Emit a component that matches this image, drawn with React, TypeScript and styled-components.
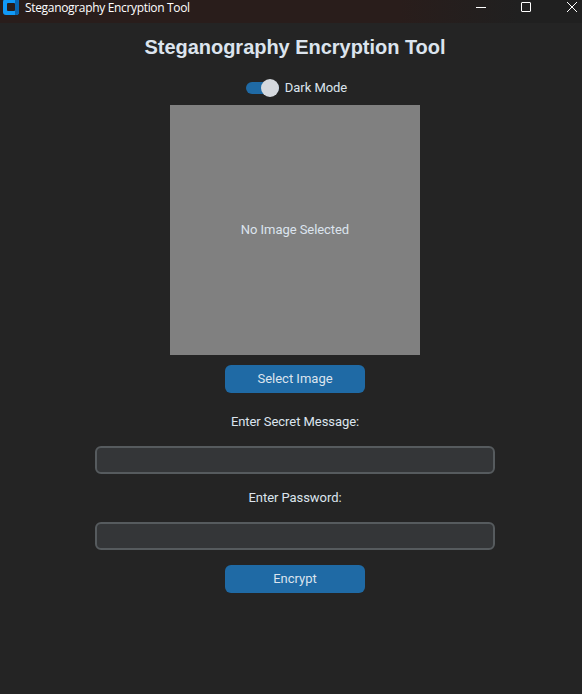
import React, { useState } from "react";
import styled, { createGlobalStyle } from "styled-components";

const GlobalStyle = createGlobalStyle`
  * { box-sizing: border-box; }
  body { margin: 0; background: #242424; overflow: hidden; }
`;

const Window = styled.div`
  width: 582px;
  height: 694px;
  display: flex;
  flex-direction: column;
  background: #242424;
  color: #dce4ee;
  font: 13px/16px Roboto, sans-serif;
  letter-spacing: -0.06px;
`;

const TitleBar = styled.header`
  height: 23px;
  flex: none;
  display: flex;
  align-items: flex-start;
  background: linear-gradient(90deg, #291d1b 0, #291d1b 400px, #202020 520px);
`;

const AppIcon = styled.svg`
  display: block;
  flex: none;
  margin-left: 3px;
`;

const WindowTitle = styled.span`
  margin-left: 6px;
  flex: 1;
  font: 12px/16px "Open Sans", "Noto Sans", sans-serif;
  letter-spacing: -0.33px;
  color: #fff;
  white-space: nowrap;
`;

const Controls = styled.div`
  display: flex;
  gap: 34px;
  padding-top: 1px;
  padding-right: 4px;
`;

const ControlIcon = styled.svg`
  display: block;
  width: 12px;
  height: 12px;
  fill: none;
  stroke: #fff;
`;

const Content = styled.main`
  flex: 1;
  width: 400px;
  margin-left: 95px;
  display: flex;
  flex-direction: column;
  align-items: center;
`;

const Heading = styled.h1`
  margin: 12px 0 0;
  font: bold 20px/24px "Liberation Sans", Arial, sans-serif;
  letter-spacing: -0.03px;
  white-space: nowrap;
`;

const SwitchRow = styled.label`
  margin-top: 17px;
  height: 24px;
  display: flex;
  align-items: center;
  gap: 6px;
  padding-left: 3px;
`;

const Track = styled.span<{ $on: boolean }>`
  width: 33px;
  height: 12px;
  border-radius: 6px;
  background: ${(p) => (p.$on ? "#1f6aa5" : "#4a4d50")};
  display: flex;
  align-items: center;
  justify-content: ${(p) => (p.$on ? "flex-end" : "flex-start")};
`;

const Knob = styled.span`
  width: 18px;
  height: 18px;
  flex: none;
  border-radius: 50%;
  background: #d5d9de;
`;

const HiddenCheckbox = styled.input`
  appearance: none;
  width: 0;
  height: 0;
  margin: 0 -6px 0 0;
`;

const Preview = styled.div`
  width: 250px;
  height: 250px;
  margin-top: 5px;
  display: flex;
  align-items: center;
  justify-content: center;
  background: #808080;
`;

const Button = styled.button<{ $top: number }>`
  width: 140px;
  height: 28px;
  margin: ${(p) => p.$top}px 0 0;
  padding: 0;
  border: 0;
  border-radius: 6px;
  background: #1f6aa5;
  color: #dce4ee;
  font: inherit;
`;

const FieldLabel = styled.label<{ $top: number }>`
  margin-top: ${(p) => p.$top}px;
  height: 16px;
`;

const Field = styled.input`
  width: 400px;
  height: 28px;
  margin: 16px 0 0;
  padding: 0 8px;
  border: 2px solid #565b5e;
  border-radius: 6px;
  background: #343638;
  color: #dce4ee;
  font: inherit;
  outline: none;
`;

export default function App() {
  const [dark, setDark] = useState(true);
  return (
    <>
      <GlobalStyle />
      <Window>
        <TitleBar>
          <AppIcon width="16" height="16" viewBox="0 0 16 16">
            <path d="M3 -1H13Q16 -1 16 2V12Q16 15 13 15H3Q0 15 0 12V2Q0 -1 3 -1Z" fill="#1199f7" />
            <path d="M12 -1H13Q16 -1 16 2V12Q16 15 13 15H12Z" fill="#0966b1" />
            <rect x="4" y="3" width="8" height="8" rx="1" fill="#291d1b" />
          </AppIcon>
          <WindowTitle>Steganography Encryption Tool</WindowTitle>
          <Controls>
            <ControlIcon viewBox="0 0 12 12"><path d="M2 6.5H12" /></ControlIcon>
            <ControlIcon viewBox="0 0 12 12"><rect x="1.5" y="1.5" width="9" height="9" rx="0.5" /></ControlIcon>
            <ControlIcon viewBox="0 0 12 12"><path d="M1 1L11 11M11 1L1 11" /></ControlIcon>
          </Controls>
        </TitleBar>
        <Content>
          <Heading>Steganography Encryption Tool</Heading>
          <SwitchRow>
            <HiddenCheckbox type="checkbox" checked={dark} onChange={() => setDark(!dark)} />
            <Track $on={dark}><Knob /></Track>
            Dark Mode
          </SwitchRow>
          <Preview>No Image Selected</Preview>
          <Button $top={10}>Select Image</Button>
          <FieldLabel $top={21} htmlFor="message">Enter Secret Message:</FieldLabel>
          <Field id="message" />
          <FieldLabel $top={16} htmlFor="password">Enter Password:</FieldLabel>
          <Field id="password" type="password" />
          <Button $top={15}>Encrypt</Button>
        </Content>
      </Window>
    </>
  );
}
